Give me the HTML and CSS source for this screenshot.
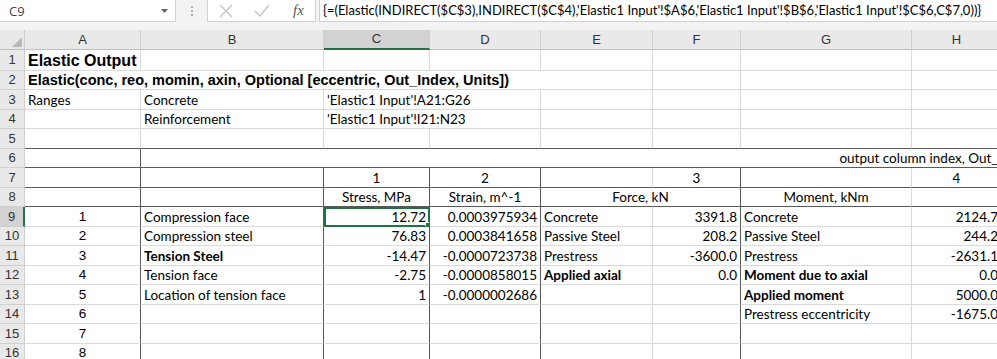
FILE: index.html
```html
<!DOCTYPE html>
<html lang="en">
  <head>
    <meta charset="UTF-8" />
    <title>Elastic Output</title>
    <link rel="stylesheet" href="styles.css">
  </head>
  <body>
    <!-- formula bar -->
    <div class="formula-bar">
      <div class="name-box">
        <span>C9</span>
        <svg class="drop" width="7" height="4" viewBox="0 0 7 4"><polygon points="0,0 7,0 3.5,4" fill="#666" /></svg>
      </div>
      <div class="grip"><i></i><i></i><i></i></div>
      <div class="fn-box">
        <svg width="14" height="14" viewBox="0 0 14 14"><path d="M1 1 L13 13 M13 1 L1 13" stroke="#c4c4c4" stroke-width="1.4" fill="none" /></svg>
        <svg width="16" height="14" viewBox="0 0 16 14"><path d="M1 7 L6 12 L15 1" stroke="#c4c4c4" stroke-width="1.4" fill="none" /></svg>
        <span class="fx">fx</span>
      </div>
      <div class="formula">{=(Elastic(INDIRECT($C$3),INDIRECT($C$4),'Elastic1 Input'!$A$6,'Elastic1 Input'!$B$6,'Elastic1 Input'!$C$6,C$7,0))}</div>
    </div>

    <!-- sheet -->
    <div class="sheet-wrap">
      <table class="sheet">
        <colgroup>
          <col class="c-hdr" />
          <col class="c-a" />
          <col class="c-b" />
          <col class="c-c" />
          <col class="c-d" />
          <col class="c-e" />
          <col class="c-f" />
          <col class="c-g" />
          <col class="c-h" />
          <col class="c-i" />
        </colgroup>
        <thead>
          <tr>
            <th class="corner"><svg width="10" height="10" viewBox="0 0 10 10"><polygon points="10,0 10,10 0,10" fill="#b9b9b9" /></svg></th>
            <th>A</th><th>B</th><th class="sel">C</th><th>D</th><th>E</th><th>F</th><th>G</th><th>H</th><th>I</th>
          </tr>
        </thead>
        <tbody>
          <tr class="r1">
            <th>1</th>
            <td class="title">Elastic Output</td><td></td><td></td><td></td><td></td><td></td><td></td><td></td><td></td>
          </tr>
          <tr>
            <th>2</th>
            <td class="subtitle" colspan="5">Elastic(conc, reo, momin, axin, Optional [eccentric, Out_Index, Units])</td><td></td><td></td><td></td><td></td>
          </tr>
          <tr>
            <th>3</th>
            <td>Ranges</td><td>Concrete</td><td colspan="2">'Elastic1 Input'!A21:G26</td><td></td><td></td><td></td><td></td><td></td>
          </tr>
          <tr>
            <th>4</th>
            <td></td><td>Reinforcement</td><td colspan="2">'Elastic1 Input'!I21:N23</td><td></td><td></td><td></td><td></td><td></td>
          </tr>
          <tr class="dark-bottom">
            <th>5</th>
            <td></td><td></td><td></td><td></td><td></td><td></td><td></td><td></td><td></td>
          </tr>
          <tr class="dark-bottom">
            <th>6</th>
            <td class="dr"></td><td class="right" colspan="8">output column index, Out_Index</td>
          </tr>
          <tr class="dark-bottom">
            <th>7</th>
            <td class="dr"></td><td class="dr"></td><td class="dr center">1</td><td class="dr center">2</td><td></td><td class="dr center">3</td><td></td><td class="center">4</td><td></td>
          </tr>
          <tr class="dark-bottom">
            <th>8</th>
            <td class="dr"></td><td class="dr"></td><td class="dr center">Stress, MPa</td><td class="dr center">Strain, m^-1</td><td class="dr center" colspan="2">Force, kN</td><td class="center">Moment, kNm</td><td></td><td></td>
          </tr>
          <tr>
            <th class="sel">9</th>
            <td class="dr num-a">1</td><td class="dr">Compression face</td><td class="dr right active">12.72<i class="handle"></i></td><td class="dr right">0.0003975934</td><td>Concrete</td><td class="dr right">3391.8</td><td>Concrete</td><td class="right">2124.7</td><td></td>
          </tr>
          <tr>
            <th>10</th>
            <td class="dr num-a">2</td><td class="dr">Compression steel</td><td class="dr right">76.83</td><td class="dr right">0.0003841658</td><td>Passive Steel</td><td class="dr right">208.2</td><td>Passive Steel</td><td class="right">244.2</td><td></td>
          </tr>
          <tr>
            <th>11</th>
            <td class="dr num-a">3</td><td class="dr bold">Tension Steel</td><td class="dr right">-14.47</td><td class="dr right">-0.0000723738</td><td>Prestress</td><td class="dr right">-3600.0</td><td>Prestress</td><td class="right">-2631.1</td><td></td>
          </tr>
          <tr>
            <th>12</th>
            <td class="dr num-a">4</td><td class="dr">Tension face</td><td class="dr right">-2.75</td><td class="dr right">-0.0000858015</td><td class="bold">Applied axial</td><td class="dr right">0.0</td><td class="bold">Moment due to axial</td><td class="right">0.0</td><td></td>
          </tr>
          <tr>
            <th>13</th>
            <td class="dr num-a">5</td><td class="dr">Location of tension face</td><td class="dr right">1</td><td class="dr right">-0.0000002686</td><td></td><td class="dr"></td><td class="bold">Applied moment</td><td class="right">5000.0</td><td></td>
          </tr>
          <tr>
            <th>14</th>
            <td class="dr num-a">6</td><td class="dr"></td><td class="dr"></td><td class="dr"></td><td></td><td class="dr"></td><td>Prestress eccentricity</td><td class="right">-1675.0</td><td></td>
          </tr>
          <tr>
            <th>15</th>
            <td class="dr num-a">7</td><td class="dr"></td><td class="dr"></td><td class="dr"></td><td></td><td class="dr"></td><td></td><td></td><td></td>
          </tr>
          <tr>
            <th>16</th>
            <td class="dr num-a">8</td><td class="dr"></td><td class="dr"></td><td class="dr"></td><td></td><td class="dr"></td><td></td><td></td><td></td>
          </tr>
        </tbody>
      </table>
    </div>
  </body>
</html>
```

FILE: styles.css
```css
body {
  margin: 0;
  background-color: #ffffff;
  font-family: Lato, "Liberation Sans", sans-serif;
  overflow: hidden;
}

/* formula bar */
.formula-bar {
  display: flex;
  height: 30px;
  background-color: #f3f3f3;
  align-items: flex-start;
}

.name-box {
  display: flex;
  align-items: center;
  justify-content: space-between;
  width: 176px;
  height: 22px;
  box-sizing: border-box;
  padding: 0 7px 0 9px;
  background-color: #ffffff;
  border: 1px solid #d0d0d0;
  border-top: none;
  border-left: none;
  font-family: "Open Sans", sans-serif;
  font-size: 13px;
  color: #444;
}

.grip {
  display: flex;
  flex-direction: column;
  gap: 2px;
  width: 31px;
  align-items: center;
  padding-top: 6px;
}

.grip i {
  width: 2px;
  height: 2px;
  background-color: #a8a8a8;
}

.fn-box {
  display: flex;
  align-items: center;
  width: 109px;
  height: 22px;
  box-sizing: border-box;
  padding: 0 8px 0 11px;
  gap: 21px;
  background-color: #ffffff;
  border: 1px solid #d0d0d0;
  border-top: none;
}

.fx {
  font-family: "Liberation Serif", serif;
  font-style: italic;
  font-size: 15px;
  color: #555;
  margin-left: 2px;
}

.formula {
  flex: 1;
  height: 22px;
  box-sizing: border-box;
  margin-left: 3px;
  padding: 2px 3px 0;
  background-color: #ffffff;
  border: 1px solid #d0d0d0;
  border-top: none;
  border-right: none;
  font-size: 13px;
  white-space: nowrap;
  overflow: hidden;
}

/* grid */
.sheet-wrap {
  width: 997px;
  overflow: hidden;
}

.sheet {
  border-collapse: separate;
  border-spacing: 0;
  table-layout: fixed;
  width: 1034px;
  font-size: 13.5px;
}

.c-hdr { width: 25px; }
.c-a { width: 116px; }
.c-b { width: 183px; }
.c-c { width: 106px; }
.c-d { width: 111px; }
.c-e { width: 112px; }
.c-f { width: 88px; }
.c-g { width: 171px; }
.c-h { width: 90px; }
.c-i { width: 32px; }

.sheet th {
  background-color: #e9e9e9;
  border-right: 1px solid #cfcfcf;
  border-bottom: 1px solid #cfcfcf;
  font-family: "Liberation Sans", sans-serif;
  font-weight: normal;
  font-size: 13px;
  color: #333;
  padding: 0;
}

.sheet thead th {
  height: 19px;
  box-sizing: border-box;
  border-bottom-color: #bdbdbd;
}

.sheet thead th.sel {
  background-color: #d2d2d2;
  border-bottom: 2px solid #217346;
}

.sheet tbody th.sel {
  background-color: #d2d2d2;
  border-right: 2px solid #217346;
}

.corner {
  text-align: right;
  vertical-align: bottom;
}

.corner svg {
  display: block;
  margin: 0 2px 2px auto;
}

.sheet tr {
  height: 19.5px;
}

.sheet tr.r1 {
  height: 21px;
}

.sheet td {
  border-right: 1px solid #dadada;
  border-bottom: 1px solid #dadada;
  padding: 0 3px 0 3px;
  white-space: nowrap;
  overflow: hidden;
  vertical-align: bottom;
  line-height: 18px;
  color: #000;
}

.sheet tr.dark-bottom td {
  border-bottom-color: #595959;
}

.sheet td.dr {
  border-right-color: #595959;
}

.title {
  font-family: "Liberation Sans", sans-serif;
  font-weight: bold;
  font-size: 16px;
}

.subtitle {
  font-family: "Liberation Sans", sans-serif;
  font-weight: bold;
  font-size: 14.5px;
}

.num-a {
  font-family: "Liberation Sans", sans-serif;
  font-size: 13.5px;
  text-align: center;
}

.right {
  text-align: right;
}

.center {
  text-align: center;
}

.bold {
  font-weight: bold;
}

.active {
  position: relative;
  overflow: visible;
  outline: 2px solid #217346;
  outline-offset: -2px;
}

.handle {
  position: absolute;
  right: -3px;
  bottom: -3px;
  width: 5px;
  height: 5px;
  background-color: #217346;
  border: 1px solid #ffffff;
}
```
